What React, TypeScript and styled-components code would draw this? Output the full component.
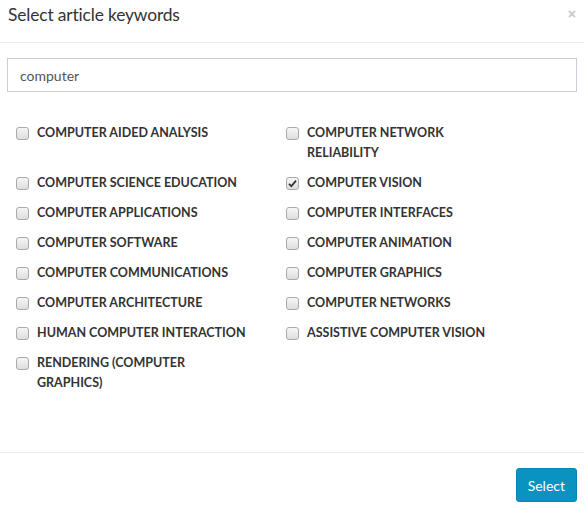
import React from "react";
import styled, { createGlobalStyle } from "styled-components";

const Global = createGlobalStyle`
  html, body { margin: 0; padding: 0; background: #fff; }
  body { font-family: Lato, "Open Sans", sans-serif; color: #333; }
  * { box-sizing: border-box; }
`;

const Modal = styled.div`
  width: 584px;
  height: 507px;
  background: #fff;
  display: flex;
  flex-direction: column;
`;

const Header = styled.div`
  height: 43px;
  border-bottom: 1px solid #ececec;
  display: flex;
  align-items: flex-start;
  justify-content: space-between;
  padding: 4px 8px 0 8px;
`;

const Title = styled.h4`
  margin: 0;
  font-size: 17.4px;
  line-height: 22px;
  font-weight: 400;
  color: #333;
  letter-spacing: -0.15px;
`;

const Close = styled.button`
  border: none;
  background: none;
  padding: 0;
  margin-top: 3px;
  font-size: 14px;
  font-weight: 700;
  color: #c8c8c8;
  font-family: Arial, "Liberation Sans", sans-serif;
  line-height: 1;
  cursor: pointer;
`;

const Body = styled.div`
  flex: 1;
  padding: 15px 7px 0 7px;
`;

const Search = styled.input`
  width: 570px;
  height: 34px;
  border: 1px solid #cfcbdc;
  border-radius: 0;
  padding: 0 12px;
  font-family: Lato, sans-serif;
  font-size: 14px;
  color: #555;
  outline: none;
`;

const Grid = styled.div`
  display: grid;
  grid-template-columns: 270px 270px;
  padding: 31px 0 0 9px;
  align-items: start;
`;

const Item = styled.label`
  display: flex;
  align-items: flex-start;
  gap: 8px;
  margin-bottom: 10px;
  cursor: pointer;
`;

const Box = styled.span<{ $checked?: boolean }>`
  flex: none;
  width: 13px;
  height: 13px;
  margin-top: 4px;
  border: 1px solid #a9a9a9;
  border-radius: 3px;
  background: linear-gradient(#f6f6f6, #dedede);
  display: flex;
  align-items: center;
  justify-content: center;
`;

const Label = styled.span`
  font-size: 12.5px;
  font-weight: 700;
  line-height: 20px;
  color: #333;
  max-width: 209px;
  text-transform: uppercase;
`;

const Footer = styled.div`
  height: 55px;
  border-top: 1px solid #ececec;
  display: flex;
  justify-content: flex-end;
  padding: 15px 7px 0 0;
`;

const SelectButton = styled.button`
  height: 34px;
  padding: 0 11px;
  background: #0a93c0;
  border: 1px solid #0886b0;
  border-radius: 3px;
  color: #fff;
  font-family: Lato, sans-serif;
  font-size: 14px;
  cursor: pointer;
`;

const Check = () => (
  <svg width="9" height="9" viewBox="0 0 9 9">
    <path d="M1 4.8 L3.4 7.2 L8 1.6" fill="none" stroke="#333" strokeWidth="1.8" />
  </svg>
);

const keywords: { text: string; checked?: boolean }[] = [
  { text: "Computer aided analysis" },
  { text: "Computer network reliability" },
  { text: "Computer science education" },
  { text: "Computer vision", checked: true },
  { text: "Computer applications" },
  { text: "Computer interfaces" },
  { text: "Computer software" },
  { text: "Computer animation" },
  { text: "Computer communications" },
  { text: "Computer graphics" },
  { text: "Computer architecture" },
  { text: "Computer networks" },
  { text: "Human computer interaction" },
  { text: "Assistive computer vision" },
  { text: "Rendering (computer graphics)" },
];

const Keyword = ({ text, checked }: { text: string; checked?: boolean }) => (
  <Item>
    <Box $checked={checked}>{checked && <Check />}</Box>
    <Label>{text}</Label>
  </Item>
);

export default function App() {
  return (
    <>
      <Global />
      <Modal>
        <Header>
          <Title>Select article keywords</Title>
          <Close aria-label="Close">×</Close>
        </Header>
        <Body>
          <Search defaultValue="computer" />
          <Grid>
            {keywords.map((k) => (
              <Keyword key={k.text} text={k.text} checked={k.checked} />
            ))}
          </Grid>
        </Body>
        <Footer>
          <SelectButton>Select</SelectButton>
        </Footer>
      </Modal>
    </>
  );
}
